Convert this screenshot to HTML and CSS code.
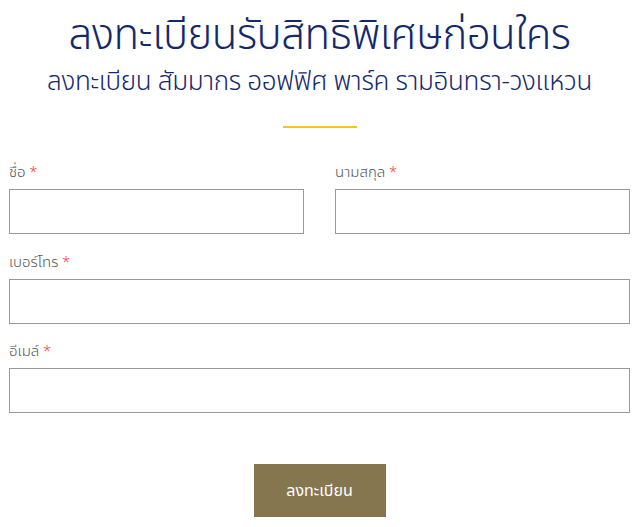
FILE: index.html
```html
<!DOCTYPE html>
<html lang="th">
<head>
    <meta charset="UTF-8">
    <meta name="viewport" content="width=device-width, initial-scale=1.0">
    <title>ลงทะเบียนรับสิทธิพิเศษก่อนใคร</title>
    <link rel="stylesheet" href="styles.css">
</head>
<body>
    <div class="container">
        <div class="heading">
            <h1>ลงทะเบียนรับสิทธิพิเศษก่อนใคร</h1>
            <h2>ลงทะเบียน สัมมากร ออฟฟิศ พาร์ค รามอินทรา-วงแหวน</h2>
            <div class="divider"></div>
        </div>
        <form class="form">
            <div class="row two">
                <div class="field">
                    <label for="fname">ชื่อ <span class="req">*</span></label>
                    <input type="text" id="fname">
                </div>
                <div class="field">
                    <label for="lname">นามสกุล <span class="req">*</span></label>
                    <input type="text" id="lname">
                </div>
            </div>
            <div class="field">
                <label for="phone">เบอร์โทร <span class="req">*</span></label>
                <input type="tel" id="phone">
            </div>
            <div class="field">
                <label for="email">อีเมล์ <span class="req">*</span></label>
                <input type="email" id="email">
            </div>
            <div class="actions">
                <button type="button">ลงทะเบียน</button>
            </div>
        </form>
    </div>
</body>
</html>
```

FILE: styles.css
```css
* {
    margin: 0;
    padding: 0;
    box-sizing: border-box;
}

body {
    font-family: "Noto Sans Thai", "Noto Sans", "DejaVu Sans", sans-serif;
    background: #fff;
    color: #444;
}

.container {
    margin: 0 10px 0 9px;
}

.heading {
    text-align: center;
    color: #14296b;
    padding-top: 8px;
}

h1 {
    font-size: 42px;
    font-weight: 300;
    line-height: 56px;
    letter-spacing: -0.5px;
}

h2 {
    font-size: 26px;
    font-weight: 300;
    line-height: 28px;
    margin-top: 4px;
    letter-spacing: -0.3px;
}

.divider {
    width: 74px;
    height: 2px;
    background: #f5c623;
    margin: 30px auto 0;
}

.form {
    display: grid;
    gap: 18px;
    margin-top: 35px;
}

.row.two {
    display: grid;
    grid-template-columns: 1fr 1fr;
    gap: 31px;
    margin-bottom: 1px;
}

.field {
    display: flex;
    flex-direction: column;
    gap: 6px;
}

label {
    font-size: 15px;
    font-weight: 300;
    line-height: 20px;
    color: #555;
}

.req {
    color: #f03030;
    font-size: 14px;
}

input {
    height: 45px;
    border: 1px solid #999;
    font-size: 15px;
    padding: 0 10px;
    outline: none;
}

.actions {
    display: flex;
    justify-content: center;
    margin-top: 33px;
}

button {
    width: 132px;
    height: 53px;
    background: #857650;
    color: #fff;
    border: none;
    font-family: inherit;
    font-size: 16px;
    cursor: pointer;
}
```
